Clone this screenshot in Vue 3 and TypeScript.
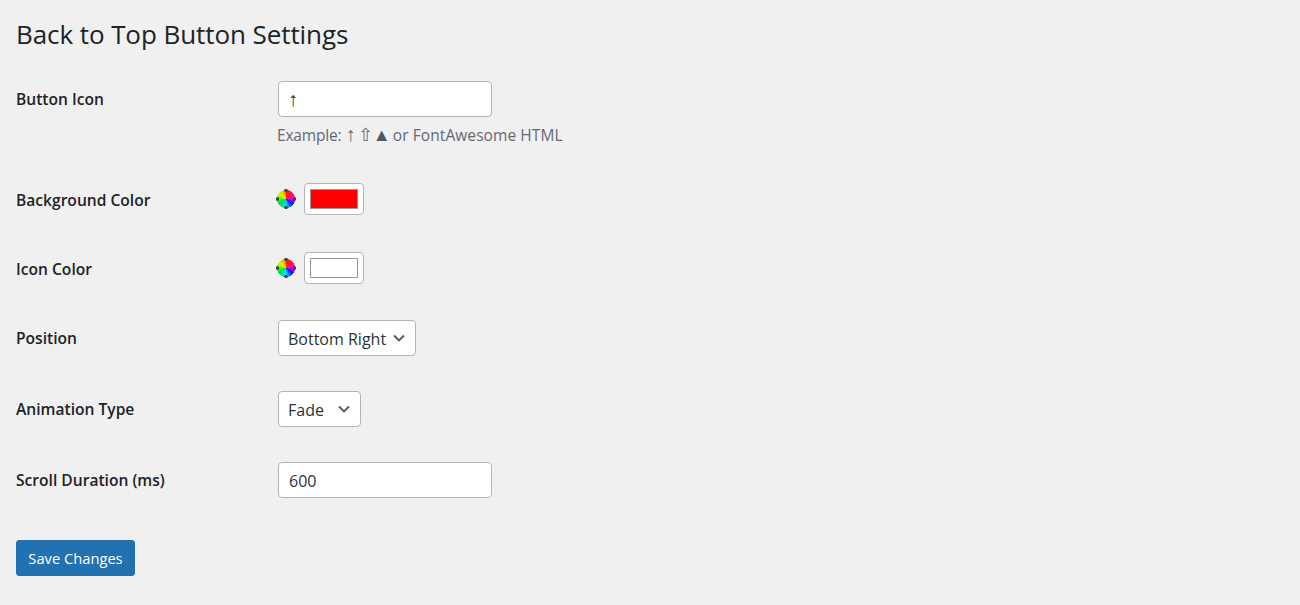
<script setup lang="ts">
import { ref } from 'vue'

const icon = ref('↑')
const bg = ref('#ff0000')
const fg = ref('#ffffff')
const position = ref('bottom-right')
const animation = ref('fade')
const duration = ref('600')
</script>

<template>
  <div class="wrap">
    <h1 class="title">Back to Top Button Settings</h1>
    <form class="form" @submit.prevent>
      <div class="row row-icon">
        <label class="label" for="icon">Button Icon</label>
        <div>
          <input id="icon" v-model="icon" class="text glyph-input" type="text" />
          <p class="desc"><span class="lead">Example:</span> <span class="g-up">↑</span> <span class="g-shift">⇧</span> <span class="g-tri">▲</span> or FontAwesome HTML</p>
        </div>
      </div>
      <div class="row row-color">
        <label class="label" for="bg">Background Color</label>
        <div class="picker">
          <span class="wheel"></span>
          <input id="bg" v-model="bg" class="color" type="color" />
        </div>
      </div>
      <div class="row row-color2">
        <label class="label" for="fg">Icon Color</label>
        <div class="picker">
          <span class="wheel"></span>
          <input id="fg" v-model="fg" class="color" type="color" />
        </div>
      </div>
      <div class="row">
        <label class="label" for="pos">Position</label>
        <div class="select-wrap pos">
          <select id="pos" v-model="position" class="select">
            <option value="bottom-right">Bottom Right</option>
            <option value="bottom-left">Bottom Left</option>
          </select>
          <svg class="chev" width="12" height="8" viewBox="0 0 12 8"><path d="M1 1.5l5 5 5-5" fill="none" stroke="#50575e" stroke-width="1.9" /></svg>
        </div>
      </div>
      <div class="row">
        <label class="label" for="anim">Animation Type</label>
        <div class="select-wrap anim">
          <select id="anim" v-model="animation" class="select">
            <option value="fade">Fade</option>
            <option value="slide">Slide</option>
          </select>
          <svg class="chev" width="12" height="8" viewBox="0 0 12 8"><path d="M1 1.5l5 5 5-5" fill="none" stroke="#50575e" stroke-width="1.9" /></svg>
        </div>
      </div>
      <div class="row row-last">
        <label class="label" for="dur">Scroll Duration (ms)</label>
        <input id="dur" v-model="duration" class="text" type="text" />
      </div>
      <button class="save" type="submit">Save Changes</button>
    </form>
  </div>
</template>

<style>
html, body { background: #f0f0f0; }
</style>

<style scoped>
.wrap {
  height: 605px;
  box-sizing: border-box;
  padding: 0 16px;
  overflow: hidden;
  background: #f0f0f0;
  color: #1d2327;
  font-family: "Open Sans", "Noto Sans", sans-serif;
  font-size: 16px;
}
.title {
  margin: 0;
  padding: 17px 0 0;
  height: 64px;
  box-sizing: border-box;
  font-size: 26px;
  line-height: 34px;
  font-weight: 400;
  letter-spacing: -0.08px;
}
.form { margin: 17px 0 0; }
.row {
  display: grid;
  grid-template-columns: 262px 1fr;
  align-items: start;
  padding-bottom: 35px;
}
.row-icon { padding-bottom: 38px; }
.row-color { padding-bottom: 37px; }
.row-color2 { padding-bottom: 36px; }
.row-last { padding-bottom: 42px; }
.label {
  font-size: 15.6px;
  font-weight: 600;
  line-height: 36px;
}
.row-color .label, .row-color2 .label { height: 32px; line-height: 34px; }
.text {
  display: block;
  width: 214px;
  height: 36px;
  box-sizing: border-box;
  padding: 2px 10px 0;
  background: #fff;
  border: 1px solid #b4b4b4;
  border-radius: 4px;
  color: #2c3338;
  font: inherit;
}
.glyph-input { font-family: "Liberation Sans", sans-serif; font-size: 20px; padding: 1px 9px 0; }
.desc {
  margin: 8px 0 0 -1px;
  height: 20px;
  color: #646970;
  font-size: 15.5px;
  line-height: 21px;
  letter-spacing: 0.08px;
}
.lead { letter-spacing: -0.2px; }
.g-up { font-family: "Liberation Sans", sans-serif; font-size: 20px; line-height: 16px; margin: 0 -2px 0 0; }
.g-shift { font-size: 18px; line-height: 16px; margin: 0 -1px 0 0; }
.g-tri { font-family: "Liberation Sans", sans-serif; font-size: 18px; line-height: 16px; margin: 0 -2px 0 -3px; color: #50575e; }
.picker {
  display: flex;
  align-items: center;
  margin-left: -2px;
  gap: 8px;
}
.wheel {
  width: 20px;
  height: 20px;
  flex: none;
  filter: blur(0.6px);
  background:
    radial-gradient(circle at 50% 7%, #444 0 1.4px, transparent 2.1px),
    radial-gradient(circle at 50% 93%, #444 0 1.4px, transparent 2.1px),
    radial-gradient(circle at 7% 50%, #444 0 1.4px, transparent 2.1px),
    radial-gradient(circle at 93% 50%, #444 0 1.4px, transparent 2.1px),
    radial-gradient(circle at 50% 50%, transparent 0 8.8px, #f0f0f0 9.3px),
    conic-gradient(from 0deg, #ff2000 20deg, #ff00c0 80deg, #1010ff 130deg, #00e0ff 180deg, #00e040 240deg, #d0ff00 310deg, #ffa000 350deg, #ff2000 360deg);
}
.color {
  display: block;
  width: 60px;
  height: 32px;
  box-sizing: border-box;
  padding: 5px;
  background: #fff;
  border: 1px solid #b4b4b4;
  border-radius: 4px;
  appearance: none;
  -webkit-appearance: none;
}
.color::-webkit-color-swatch-wrapper { padding: 0; }
.color::-webkit-color-swatch { border: 1px solid #999; border-radius: 0; }
.select-wrap { position: relative; height: 36px; }
.pos { width: 138px; }
.anim { width: 83px; }
.select {
  display: block;
  width: 100%;
  height: 36px;
  box-sizing: border-box;
  padding: 2px 24px 0 9px;
  background: #fff;
  border: 1px solid #b4b4b4;
  border-radius: 4px;
  color: #2c3338;
  font: inherit;
  appearance: none;
  -webkit-appearance: none;
}
.chev {
  position: absolute;
  right: 11px;
  top: 14px;
  pointer-events: none;
}
.save {
  display: block;
  width: 119px;
  height: 36px;
  padding: 0;
  background: #2271b1;
  border: 1px solid #2271b1;
  border-radius: 3px;
  color: #fff;
  font: inherit;
  font-size: 14.7px;
}
</style>
